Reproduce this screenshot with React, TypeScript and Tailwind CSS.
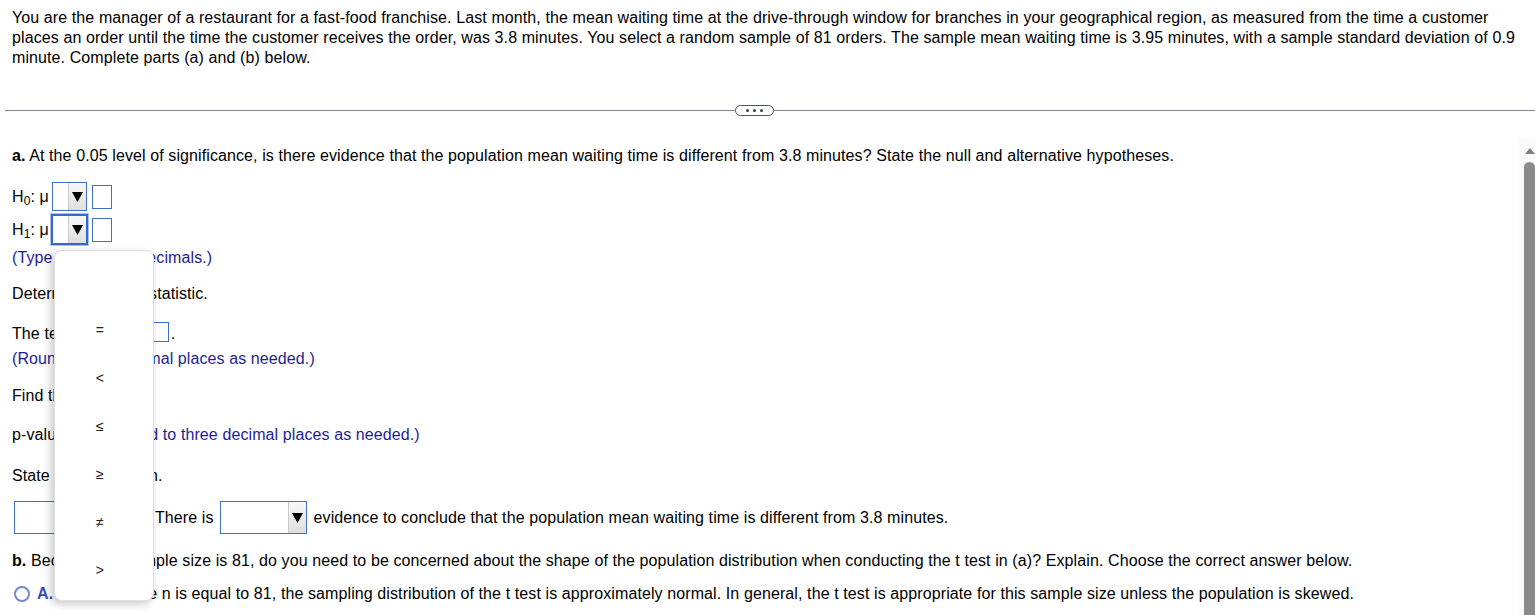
import type { ReactNode } from "react";

const font = "font-['Liberation_Sans',Arial,sans-serif]";

function Arrow() {
  return (
    <svg width="11" height="10" viewBox="0 0 11 10">
      <polygon points="0,0 11,0 5.5,10" fill="#000" />
    </svg>
  );
}

type DropProps = {
  className: string;
  focused?: boolean;
};

function Drop({ className, focused }: DropProps) {
  return (
    <div
      className={`flex shrink-0 justify-end bg-white ${
        focused
          ? "border-2 border-[#3567cc] shadow-[0_0_0_1px_#a9c0ee]"
          : "border border-[#3f6fd1]"
      } ${className}`}
    >
      <div className="flex w-[18px] items-center justify-center border-l border-[#c9c9c9] bg-gradient-to-b from-[#f8f8f8] to-[#dedede]">
        <Arrow />
      </div>
    </div>
  );
}

function Box({ className }: { className: string }) {
  return <div className={`shrink-0 border border-[#3f6fd1] bg-white ${className}`} />;
}

function Row({ className, children }: { className: string; children: ReactNode }) {
  return <div className={`flex items-center whitespace-pre ${className}`}>{children}</div>;
}

const options = ["", "=", "<", "\u2264", "\u2265", "\u2260", ">"];

export default function App() {
  return (
    <div
      className={`h-[615px] w-[1535px] overflow-hidden bg-white text-[16px] leading-[20px] tracking-[0.1px] text-black ${font}`}
    >
      <p className="pl-[12px] pr-[8px] pt-[8px]">
        You are the manager of a restaurant for a fast-food franchise. Last month, the mean waiting time at the
        drive-through window for branches in your geographical region, as measured from the time a customer places an
        order until the time the customer receives the order, was 3.8 minutes. You select a random sample of 81
        orders. The sample mean waiting time is 3.95 minutes, with a sample standard deviation of 0.9 minute. Complete
        parts (a) and (b) below.
      </p>

      <div className="mt-[37px] flex h-[11px] items-center pl-[5px]">
        <div className="h-[1px] w-[730px] bg-[#7c8597]" />
        <div className="flex h-[11px] w-[39px] items-center justify-center gap-[4px] rounded-full border-[1.5px] border-[#4b5360] bg-white">
          <span className="h-[3px] w-[3px] rounded-full bg-[#3b414c]" />
          <span className="h-[3px] w-[3px] rounded-full bg-[#3b414c]" />
          <span className="h-[3px] w-[3px] rounded-full bg-[#3b414c]" />
        </div>
        <div className="h-[1px] flex-1 bg-[#7c8597]" />
      </div>

      <div className="mt-[23px] flex h-[476px]">
        <div className="relative flex-1 pl-[12px]">
          <Row className="mt-[7px] h-[20px]">
            <b>a.</b> At the 0.05 level of significance, is there evidence that the population mean waiting time is
            different from 3.8 minutes? State the null and alternative hypotheses.
          </Row>

          <Row className="mt-[16px] h-[29px]">
            <span>
              H<sub className="text-[12px]">0</sub>: μ
            </span>
            <Drop className="ml-[3px] h-[29px] w-[35px]" />
            <Box className="ml-[5px] h-[24px] w-[20px]" />
          </Row>
          <Row className="mt-[4px] h-[29px]">
            <span>
              H<sub className="text-[12px]">1</sub>: μ
            </span>
            <Drop focused className="ml-[2px] h-[31px] w-[37px]" />
            <Box className="ml-[4px] h-[24px] w-[20px]" />
          </Row>
          <Row className="mt-[4px] h-[20px] text-[#1e1e94]">(Type integers or decimals.)</Row>

          <Row className="mt-[16px] h-[20px]">Determine the test statistic.</Row>

          <Row className="mt-[18px] h-[20px]">
            <span className="pt-[3px]">The test statistic is</span>
            <Box className="ml-[5px] h-[20px] w-[18px]" />
            <span className="ml-[2px] pt-[3px]">.</span>
          </Row>
          <Row className="mt-[7px] h-[20px] text-[#1e1e94]">(Round to two decimal places as needed.)</Row>

          <Row className="mt-[17px] h-[20px]">Find the p-value.</Row>

          <Row className="mt-[19px] h-[20px]">
            <span>p-value =</span>
            <Box className="ml-[4px] h-[20px] w-[18px]" />
            <span className="ml-[4px] text-[#1e1e94]">(Round to three decimal places as needed.)</span>
          </Row>

          <Row className="mt-[21px] h-[20px]">State the conclusion.</Row>

          <Row className="mt-[15px] h-[33px]">
            <Drop className="ml-[2px] h-[33px] w-[110px]" />
            <span className="ml-[4px]">
              H<sub className="text-[12px]">0</sub>.
            </span>
            <span className="ml-[4px]">There is</span>
            <Drop className="ml-[6px] h-[33px] w-[87px]" />
            <span className="ml-[7px]">
              evidence to conclude that the population mean waiting time is different from 3.8 minutes.
            </span>
          </Row>

          <Row className="mt-[17px] h-[20px]">
            <b>b.</b> Because the sample size is 81, do you need to be concerned about the shape of the population
            distribution when conducting the t test in (a)? Explain. Choose the correct answer below.
          </Row>

          <Row className="mt-[13px] h-[20px]">
            <span className="ml-[2px] h-[16px] w-[16px] rounded-full border-2 border-[#7489d2] bg-white" />
            <b className="ml-[7px] text-[#3a4bbd]">A.</b>
            <span className="ml-[13px]">
              No, because n is equal to 81, the sampling distribution of the t test is approximately normal. In
              general, the t test is appropriate for this sample size unless the population is skewed.
            </span>
          </Row>

          <div className="absolute left-[54px] top-[111px] h-[351px] w-[100px] rounded-[8px] border border-[#dedede] bg-white pt-[7px] shadow-[-3px_3px_8px_rgba(0,0,0,0.22)]">
            {options.map((option, index) => (
              <div
                key={index}
                className="flex h-[48px] items-center justify-center pr-[8px] text-[14px] text-[#222]"
              >
                {option}
              </div>
            ))}
          </div>
        </div>

        <div className="flex w-[16px] flex-col items-end bg-[#fafafa]">
          <div className="flex h-[23px] w-[11px] items-center justify-center">
            <svg width="10" height="6" viewBox="0 0 10 6">
              <polygon points="0,6 10,6 5,0" fill="#7f7f7f" />
            </svg>
          </div>
          <div className="w-[11px] flex-1 rounded-t-full bg-[#8a8a8a]" />
        </div>
      </div>
    </div>
  );
}
